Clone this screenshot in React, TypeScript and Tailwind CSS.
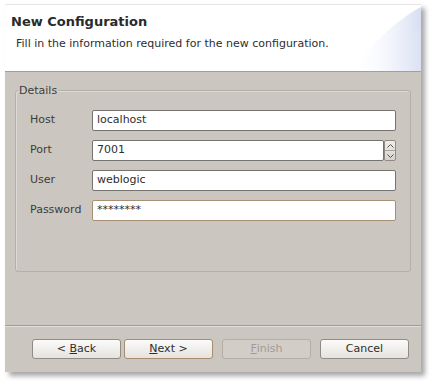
import React from "react";

const font = { fontFamily: '"DejaVu Sans", "Liberation Sans", sans-serif' };

function Field({ label, value, spinner, focused }: { label: string; value: string; spinner?: boolean; focused?: boolean }) {
  return (
    <div className="flex items-center h-[21px]">
      <div className="w-[76px] pl-[14px] text-[11px] text-[#3c3c3c]">{label}</div>
      <div className="flex w-[304px] h-[21px]">
        <div
          className={`flex-1 h-full bg-white rounded-[2px] border flex items-center px-[4px] text-[11px] text-[#2e2e2e] ${
            focused ? "border-[#a98f74]" : "border-[#76736e]"
          }`}
        >
          {value}
        </div>
        {spinner && (
          <div className="w-[12px] h-full flex flex-col border border-[#8e8b85] rounded-[2px] bg-gradient-to-b from-[#f0eeea] to-[#d6d3cd]">
            <div className="flex-1 flex items-center justify-center border-b border-[#a7a49e]">
              <svg width="7" height="4" viewBox="0 0 7 4"><path d="M0.5 3.5 L3.5 0.5 L6.5 3.5" fill="none" stroke="#555" strokeWidth="1" /></svg>
            </div>
            <div className="flex-1 flex items-center justify-center">
              <svg width="7" height="4" viewBox="0 0 7 4"><path d="M0.5 0.5 L3.5 3.5 L6.5 0.5" fill="none" stroke="#555" strokeWidth="1" /></svg>
            </div>
          </div>
        )}
      </div>
    </div>
  );
}

function Btn({ children, variant }: { children: React.ReactNode; variant?: "default" | "disabled" }) {
  const cls =
    variant === "disabled"
      ? "border-[#b3afa8] bg-[#d2cec7] text-[#a09c95]"
      : variant === "default"
      ? "border-[#a88c70] bg-gradient-to-b from-[#fbfbfa] to-[#e6e3de] text-[#2e2e2e]"
      : "border-[#8f8c86] bg-gradient-to-b from-[#fbfbfa] to-[#e6e3de] text-[#2e2e2e]";
  return (
    <div className={`w-[89px] h-[20px] rounded-[3px] border flex items-center justify-center text-[11px] whitespace-pre ${cls}`}>
      {children}
    </div>
  );
}

export default function App() {
  return (
    <div className="w-[431px] h-[381px] bg-white relative" style={font}>
      <div className="absolute left-[5px] top-[4px] w-[416px] h-[368px] bg-[#cbc7c0] flex flex-col border-t border-[#e6e6e6] shadow-[4px_4px_5px_rgba(0,0,0,0.35)]">
        {/* header */}
        <div className="relative h-[67px] bg-white border-b border-[#a29f98] overflow-hidden">
          <svg className="absolute right-0 top-0" width="90" height="67" viewBox="0 0 90 67">
            <defs>
              <linearGradient id="g1" x1="0" y1="0" x2="1" y2="0">
                <stop offset="0" stopColor="#ffffff" stopOpacity="0" />
                <stop offset="1" stopColor="#d7def2" />
              </linearGradient>
              <linearGradient id="g2" x1="0" y1="0" x2="1" y2="0">
                <stop offset="0" stopColor="#ffffff" stopOpacity="0" />
                <stop offset="1" stopColor="#dde3f4" />
              </linearGradient>
            </defs>
            <path d="M20 67 C40 40 65 15 90 2 L90 67 Z" fill="url(#g1)" />
            <path d="M40 67 C55 45 70 30 90 25 L90 67 Z" fill="url(#g2)" opacity="0.7" />
          </svg>
          <div className="absolute left-[6px] top-[7px] text-[13px] font-bold text-[#2a2a2a]">New Configuration</div>
          <div className="absolute left-[11px] top-[31px] text-[11px] text-[#2e2e2e]">Fill in the information required for the new configuration.</div>
        </div>
        {/* content */}
        <div className="flex-1 px-[10px] pt-[12px]">
          <fieldset className="border border-[#b4b0a9] rounded-[3px] h-[188px] shadow-[inset_1px_1px_0_rgba(255,255,255,0.35)]">
            <legend className="ml-[2px] px-[1px] text-[11px] text-[#3c3c3c] leading-[13px]">Details</legend>
            <div className="flex flex-col gap-[9px] pt-[13px]">
              <Field label="Host" value="localhost" />
              <Field label="Port" value="7001" spinner />
              <Field label="User" value="weblogic" />
              <Field label="Password" value="********" focused />
            </div>
          </fieldset>
        </div>
        {/* footer */}
        <div className="h-[47px] border-t border-[#9f9c96] shadow-[inset_0_1px_0_#e2dfda] flex items-start pt-[13px] pl-[27px]">
          <div className="flex">
            <Btn>
              {"< "}<span className="underline">B</span>ack
            </Btn>
            <div className="w-[3px]" />
            <Btn variant="default">
              <span className="underline">N</span>{"ext >"}
            </Btn>
            <div className="w-[9px]" />
            <Btn variant="disabled">
              <span className="underline">F</span>inish
            </Btn>
            <div className="w-[9px]" />
            <Btn>Cancel</Btn>
          </div>
        </div>
      </div>
    </div>
  );
}
